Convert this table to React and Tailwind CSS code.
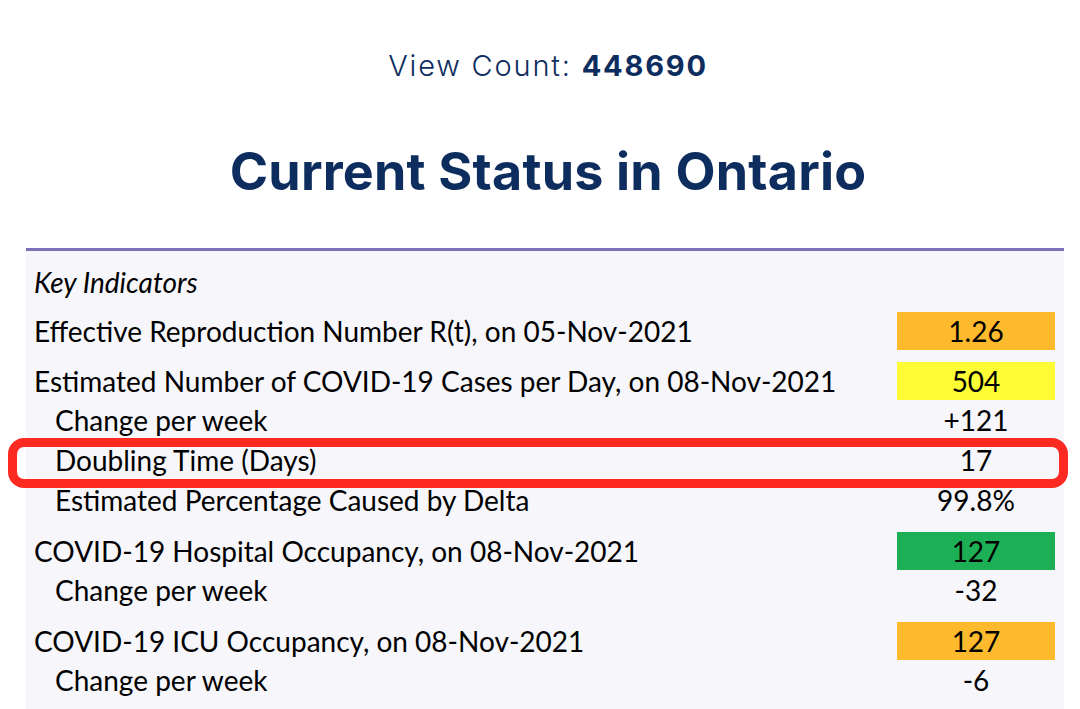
import React from "react";

const rows = [
    { label: "Effective Reproduction Number R(t), on 05-Nov-2021", value: "1.26", color: "bg-[#fdba2c]" },
    { label: "Estimated Number of COVID-19 Cases per Day, on 08-Nov-2021", value: "504", color: "bg-[#fefd35]" },
    { label: "Change per week", value: "+121", sub: true },
    { label: "Doubling Time (Days)", value: "17", sub: true, marked: true },
    { label: "Estimated Percentage Caused by Delta", value: "99.8%", sub: true },
    { label: "COVID-19 Hospital Occupancy, on 08-Nov-2021", value: "127", color: "bg-[#1daf55]" },
    { label: "Change per week", value: "-32", sub: true },
    { label: "COVID-19 ICU Occupancy, on 08-Nov-2021", value: "127", color: "bg-[#fdba2c]" },
    { label: "Change per week", value: "-6", sub: true },
];

export default function App() {
    return (
        <div className="w-[1080px] h-[709px] bg-white overflow-hidden font-['Inter',sans-serif]">
            <div className="pt-[46px] pl-[16px] text-center text-[29px] leading-[40px] text-[#0d2d5e] font-light tracking-[1.8px]">
                View Count: <span className="font-bold">448690</span>
            </div>
            <h1 className="mt-[56px] pl-[16px] text-center text-[52px] leading-[60px] font-bold text-[#0d2d5e] tracking-[0.2px]">
                Current Status in Ontario
            </h1>

            <div className="mt-[46px] ml-[26px] w-[1038px] border-t-[3px] border-[#7b72b8] bg-[#f6f6fb] pb-[20px] font-['Lato','Open_Sans',sans-serif] text-[28px] text-black">
                <div className="h-10 mt-[11px] flex items-center pl-[8px] italic">
                    Key Indicators
                </div>
                {rows.map((r, i) =>
                    r.sub ? (
                        <div key={i} className="relative h-10 flex items-center">
                            <div className="flex-1 pl-[29px]">{r.label}</div>
                            <div className="w-[158px] mr-[9px] text-center">{r.value}</div>
                            {r.marked && (
                                <div className="absolute left-[-18px] right-[-4px] top-[-2px] bottom-[-8px] border-[9px] border-[#fd2a22] rounded-[16px]"></div>
                            )}
                        </div>
                    ) : (
                        <div key={i} className={`h-[38px] flex items-center ${i === 0 ? "mt-[10px]" : "mt-3"}`}>
                            <div className="flex-1 pl-[8px]">{r.label}</div>
                            <div className={`w-[158px] mr-[9px] h-full flex items-center justify-center ${r.color}`}>
                                {r.value}
                            </div>
                        </div>
                    )
                )}
            </div>
        </div>
    );
}
